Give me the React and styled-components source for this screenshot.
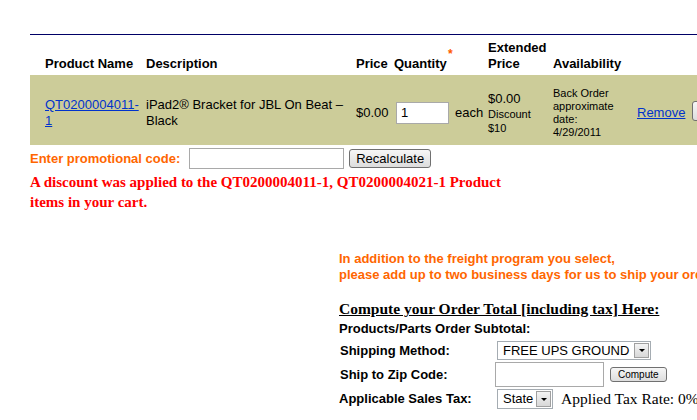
import React from 'react';
import styled, { createGlobalStyle } from 'styled-components';

const GlobalStyle = createGlobalStyle`
  body {
    margin: 0;
    background: #fff;
    font-family: "Liberation Sans", Arial, sans-serif;
    font-size: 13px;
    color: #000;
    overflow: hidden;
  }
`;

const Page = styled.div`
  width: 697px;
  height: 420px;
  overflow: hidden;
  box-sizing: border-box;
  padding: 34px 0 0 30px;
`;

const Rule = styled.div`
  height: 1px;
  background: #000066;
`;

const cols = '15px 101px 210px 38px 94px 65px 84px 55px 1fr';

const HeaderRow = styled.div`
  display: grid;
  grid-template-columns: ${cols};
  height: 40px;
  align-items: end;
  box-sizing: border-box;
  padding-bottom: 3px;
`;

const Th = styled.div`
  font-weight: bold;
  line-height: 16px;
  white-space: nowrap;
  position: relative;
`;

const Star = styled.span`
  position: absolute;
  left: 54px;
  top: -10px;
  color: #ff5a00;
  font-size: 12px;
  font-weight: bold;
`;

const DataRow = styled.div`
  display: grid;
  grid-template-columns: ${cols};
  height: 70px;
  box-sizing: border-box;
  padding-top: 6px;
  align-items: center;
  background: #cccc99;
`;

const Td = styled.div`
  line-height: ${p => p.$lh || 16}px;
  font-size: ${p => p.$size || 13}px;
  padding-right: ${p => p.$pr || 0}px;
  display: ${p => (p.$flex ? 'flex' : 'block')};
  align-items: center;
  white-space: ${p => (p.$nowrap ? 'nowrap' : 'normal')};
`;

const Link = styled.a`
  color: #0033cc;
  text-decoration: underline;
`;

const Small = styled.div`
  font-size: 11px;
  line-height: 14px;
`;

const TextInput = styled.span`
  display: inline-block;
  box-sizing: border-box;
  width: ${p => p.$w}px;
  height: ${p => p.$h}px;
  border: 1px solid #a9a9a9;
  background: #fff;
  padding: 2px 4px;
  font-size: 13px;
  line-height: ${p => p.$h - 6}px;
  margin: ${p => p.$m || '0'};
`;

const Button = styled.span`
  display: inline-block;
  box-sizing: border-box;
  height: ${p => p.$h}px;
  padding: 0 ${p => p.$px || 6}px;
  border: 1px solid #707070;
  border-radius: 3px;
  background: linear-gradient(#f6f6f6, #dddddd);
  font-size: ${p => p.$size || 13}px;
  line-height: ${p => p.$h - 2}px;
  margin: ${p => p.$m || '0'};
  white-space: nowrap;
`;

const CutButton = styled(Button)`
  width: 30px;
  overflow: hidden;
`;

const PromoRow = styled.div`
  display: flex;
  align-items: center;
  height: 25px;
  margin-top: 1px;
`;

const Orange = styled.div`
  color: #ff6600;
  font-weight: bold;
  line-height: 16px;
`;

const Notice = styled.div`
  font-family: "Liberation Serif", "Times New Roman", serif;
  font-weight: bold;
  font-size: 15px;
  line-height: 20px;
  color: #ff0000;
  width: 505px;
  margin-top: 1px;
`;

const Freight = styled.div`
  margin: 39px 0 0 309px;
  white-space: nowrap;
`;

const Compute = styled.div`
  margin: 17px 0 0 309px;
`;

const Heading = styled.div`
  font-family: "Liberation Serif", "Times New Roman", serif;
  font-weight: bold;
  font-size: 15.5px;
  line-height: 18px;
  text-decoration: underline;
`;

const FormGrid = styled.div`
  display: grid;
  grid-template-columns: 156px auto;
  align-items: center;
`;

const Label = styled.div`
  font-weight: bold;
  line-height: 16px;
  padding-left: ${p => p.$pl || 0}px;
  grid-column: ${p => (p.$span ? '1 / 3' : 'auto')};
  height: ${p => p.$h || 'auto'};
  display: flex;
  align-items: center;
`;

const Field = styled.div`
  display: flex;
  align-items: center;
  height: ${p => p.$h}px;
`;

const SelectBox = styled.span`
  display: inline-flex;
  box-sizing: border-box;
  width: ${p => p.$w}px;
  height: ${p => p.$h}px;
  border: 1px solid #a5acb2;
  background: #fff;
  margin-left: 2px;
  padding: 1px;
`;

const SelectText = styled.span`
  flex: 1;
  padding-left: 4px;
  font-size: 13px;
  line-height: ${p => p.$h - 4}px;
  white-space: nowrap;
`;

const Arrow = styled.span`
  width: 15px;
  box-sizing: border-box;
  border: 1px solid #a0a0a0;
  background: linear-gradient(#f4f4f4, #d8d8d8);
  display: flex;
  align-items: center;
  justify-content: center;
  &::after {
    content: '';
    border-left: 3px solid transparent;
    border-right: 3px solid transparent;
    border-top: 3px solid #000;
  }
`;

const Serif = styled.span`
  font-family: "Liberation Serif", "Times New Roman", serif;
  font-size: 15.5px;
  margin-left: 8px;
  white-space: nowrap;
`;

const Select = ({ w, h, value }) => (
  <SelectBox $w={w} $h={h}>
    <SelectText $h={h}>{value}</SelectText>
    <Arrow />
  </SelectBox>
);

export default function App() {
  return (
    <Page>
      <GlobalStyle />
      <Rule />
      <HeaderRow>
        <div />
        <Th>Product Name</Th>
        <Th>Description</Th>
        <Th>Price</Th>
        <Th>Quantity<Star>*</Star></Th>
        <Th>Extended<br />Price</Th>
        <Th>Availability</Th>
        <div />
        <div />
      </HeaderRow>
      <DataRow>
        <div />
        <Td><Link href="#">QT0200004011-<br />1</Link></Td>
        <Td $pr={6}>iPad2® Bracket for JBL On Beat – Black</Td>
        <Td>$0.00</Td>
        <Td $flex $nowrap>
          <TextInput $w={53} $h={22} $m="0 6px 0 2px">1</TextInput>each
        </Td>
        <Td>
          $0.00
          <Small>Discount<br />$10</Small>
        </Td>
        <Td $size={11} $lh={13}>Back Order<br />approximate<br />date:<br />4/29/2011</Td>
        <Td><Link href="#">Remove</Link></Td>
        <Td><CutButton $h={20} /></Td>
      </DataRow>
      <PromoRow>
        <Orange>Enter promotional code:</Orange>
        <TextInput $w={155} $h={21} $m="0 0 0 9px" />
        <Button $h={19} $px={6} $m="0 0 0 5px">Recalculate</Button>
      </PromoRow>
      <Notice>A discount was applied to the QT0200004011-1, QT0200004021-1 Product items in your cart.</Notice>
      <Freight>
        <Orange>In addition to the freight program you select,</Orange>
        <Orange>please add up to two business days for us to ship your order.</Orange>
      </Freight>
      <Compute>
        <Heading>Compute your Order Total [including tax] Here:</Heading>
        <FormGrid>
          <Label $span $h="22px">Products/Parts Order Subtotal:</Label>
          <Label $pl={1}>Shipping Method:</Label>
          <Field $h={21}><Select w={154} h={19} value="FREE UPS GROUND" /></Field>
          <Label $pl={1}>Ship to Zip Code:</Label>
          <Field $h={27}>
            <TextInput $w={109} $h={25} />
            <Button $h={15} $size={10} $px={7} $m="0 0 0 6px">Compute</Button>
          </Field>
          <Label>Applicable Sales Tax:</Label>
          <Field $h={22}>
            <Select w={56} h={20} value="State" />
            <Serif>Applied Tax Rate: 0%</Serif>
          </Field>
        </FormGrid>
      </Compute>
    </Page>
  );
}
